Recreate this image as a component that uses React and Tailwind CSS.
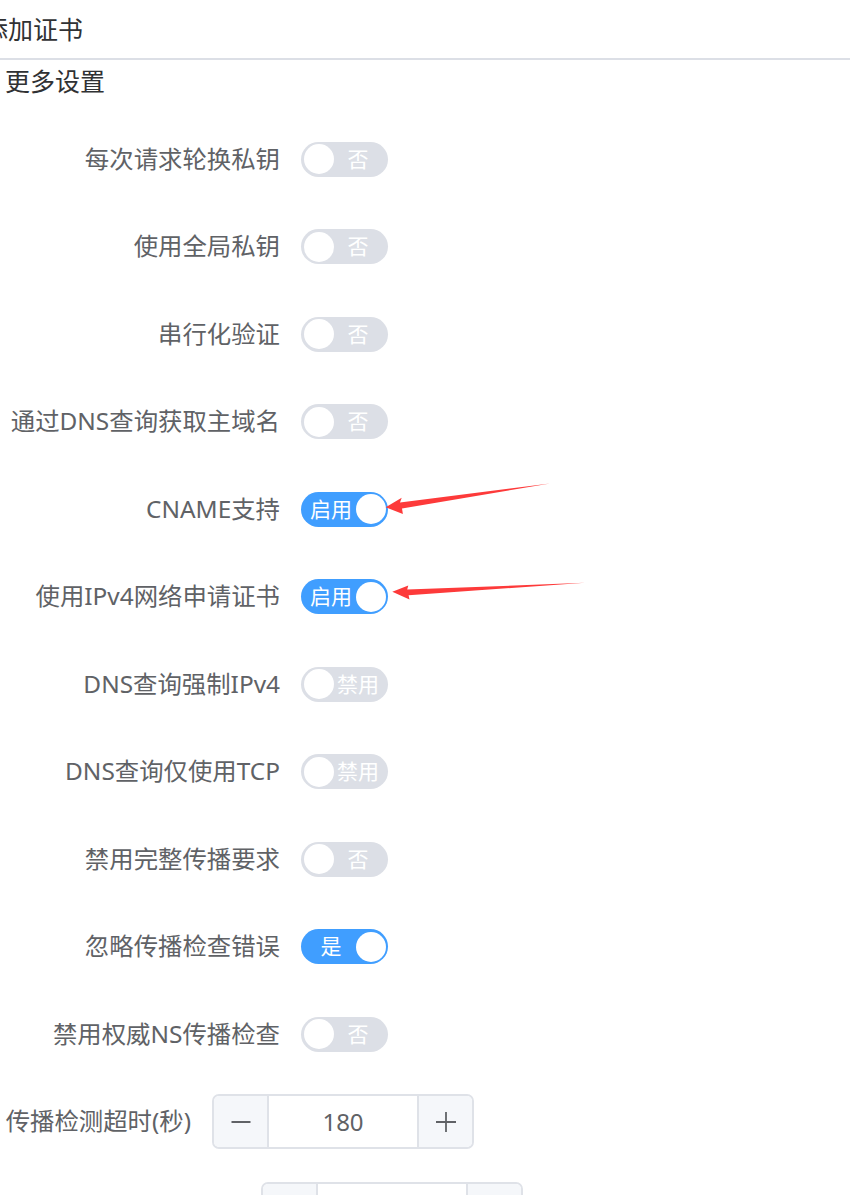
import React from "react";

const FONT = { fontFamily: '"Noto Sans", "Noto Sans CJK SC", sans-serif' };

const rows = [
  { label: "每次请求轮换私钥", on: false, text: "否" },
  { label: "使用全局私钥", on: false, text: "否" },
  { label: "串行化验证", on: false, text: "否" },
  { label: "通过DNS查询获取主域名", on: false, text: "否" },
  { label: "CNAME支持", on: true, text: "启用" },
  { label: "使用IPv4网络申请证书", on: true, text: "启用" },
  { label: "DNS查询强制IPv4", on: false, text: "禁用" },
  { label: "DNS查询仅使用TCP", on: false, text: "禁用" },
  { label: "禁用完整传播要求", on: false, text: "否" },
  { label: "忽略传播检查错误", on: true, text: "是" },
  { label: "禁用权威NS传播检查", on: false, text: "否" },
];

function Switch({ on, text }) {
  return (
    <div
      className={
        "relative w-[87px] h-[35px] rounded-full flex items-center " +
        (on ? "bg-[#409eff] pl-[7px] pr-[34px]" : "bg-[#dcdfe6] pl-[34px] pr-[7px]")
      }
    >
      <span className="flex-1 text-center text-white text-[21px] leading-none">{text}</span>
      <span
        className={
          "absolute top-[2.5px] w-[30px] h-[30px] rounded-full bg-white " +
          (on ? "right-[2.5px]" : "left-[2.5px]")
        }
      />
    </div>
  );
}

function NumberInput({ value }) {
  return (
    <div className="w-[262px] h-[55px] flex border-2 border-[#dfe2e8] rounded-[7px] overflow-hidden">
      <div className="w-[55px] bg-[#f5f7fa] border-r-2 border-[#dfe2e8] flex items-center justify-center">
        <svg width="20" height="20" viewBox="0 0 20 20">
          <line x1="0.5" y1="10" x2="19.5" y2="10" stroke="#606266" strokeWidth="1.8" />
        </svg>
      </div>
      <div className="flex-1 flex items-center justify-center text-[24px] leading-none text-[#606266]">
        {value}
      </div>
      <div className="w-[55px] bg-[#f5f7fa] border-l-2 border-[#dfe2e8] flex items-center justify-center">
        <svg width="20" height="20" viewBox="0 0 20 20">
          <line x1="0" y1="10" x2="20" y2="10" stroke="#606266" strokeWidth="1.8" />
          <line x1="10" y1="0" x2="10" y2="20" stroke="#606266" strokeWidth="1.8" />
        </svg>
      </div>
    </div>
  );
}

export default function App() {
  return (
    <div className="relative w-[850px] h-[1195px] overflow-hidden bg-white" style={FONT}>
      <div className="h-[60px] flex items-center border-b-2 border-[#dcdfe6]">
        <span className="ml-[-17px] text-[25px] leading-none text-[#303133] whitespace-nowrap">添加证书</span>
      </div>
      <div className="h-[43px] pl-[5px] flex items-center text-[25px] leading-none text-[#303133]">更多设置</div>
      <div className="pt-[28px] flex flex-col">
        {rows.map((r, i) => (
          <div key={i} className="h-[56px] mb-[31.5px] flex items-center">
            <div className="w-[301px] pr-[21px] text-right text-[24.4px] leading-none text-[#606266] whitespace-nowrap">
              {r.label}
            </div>
            <Switch on={r.on} text={r.text} />
          </div>
        ))}
        <div className="h-[56px] mb-[31.5px] flex items-center">
          <div className="w-[212px] pr-[21px] text-right text-[24.4px] leading-none text-[#606266] whitespace-nowrap">
            传播检测超时(秒)
          </div>
          <NumberInput value="180" />
        </div>
        <div className="h-[56px] mb-[31.5px] flex items-center">
          <div className="w-[261px] pr-[21px] text-right text-[24.4px] leading-none text-[#606266] whitespace-nowrap">
            传播检测间隔(秒)
          </div>
          <NumberInput value="" />
        </div>
      </div>
      <svg className="absolute inset-0 pointer-events-none" width="850" height="1195" viewBox="0 0 850 1195">
        <polygon
          points="385.7,507.3 401.7,497.8 400,502.6 550,483.5 402,508.6 402.9,514 "
          fill="#fd3a3a"
        />
        <polygon
          points="392.3,591.7 408.3,585.6 407.2,589.6 585,582.8 408.6,595.2 409.5,599.6"
          fill="#fd3a3a"
        />
      </svg>
    </div>
  );
}
